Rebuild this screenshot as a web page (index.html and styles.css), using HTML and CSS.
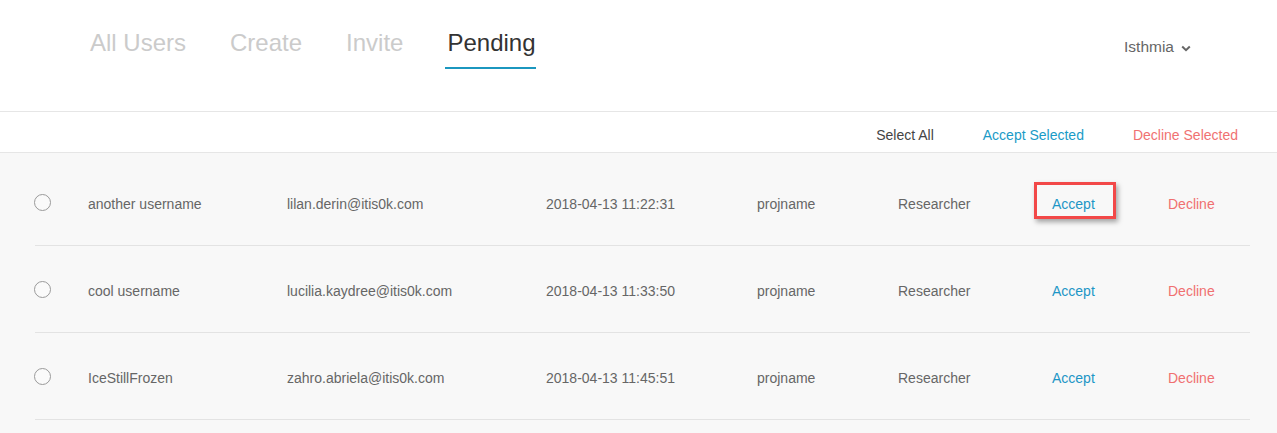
FILE: index.html
```html
<!DOCTYPE html>
<html>
<head>
<meta charset="utf-8">
<link rel="stylesheet" href="styles.css">
</head>
<body>
<header class="header">
  <nav class="tabs">
    <a class="tab">All Users</a>
    <a class="tab">Create</a>
    <a class="tab">Invite</a>
    <a class="tab active">Pending</a>
  </nav>
  <div class="account">
    <span>Isthmia</span>
    <svg class="chev" width="10" height="7" viewBox="0 0 10 7"><path d="M1.2 1.5 L5 5.2 L8.8 1.5" fill="none" stroke="#666" stroke-width="2"/></svg>
  </div>
</header>
<div class="toolbar">
  <a class="tool select">Select All</a>
  <a class="tool accept">Accept Selected</a>
  <a class="tool decline">Decline Selected</a>
</div>
<main class="list">
  <div class="row">
    <span class="radio"></span>
    <span>another username</span>
    <span>lilan.derin@itis0k.com</span>
    <span>2018-04-13 11:22:31</span>
    <span>projname</span>
    <span>Researcher</span>
    <span class="act accept"><span class="highlight"></span>Accept</span>
    <span class="act decline">Decline</span>
  </div>
  <div class="row">
    <span class="radio"></span>
    <span>cool username</span>
    <span>lucilia.kaydree@itis0k.com</span>
    <span>2018-04-13 11:33:50</span>
    <span>projname</span>
    <span>Researcher</span>
    <span class="act accept">Accept</span>
    <span class="act decline">Decline</span>
  </div>
  <div class="row">
    <span class="radio"></span>
    <span>IceStillFrozen</span>
    <span>zahro.abriela@itis0k.com</span>
    <span>2018-04-13 11:45:51</span>
    <span>projname</span>
    <span>Researcher</span>
    <span class="act accept">Accept</span>
    <span class="act decline">Decline</span>
  </div>
</main>
</body>
</html>
```
FILE: styles.css
```css
html, body {
  margin: 0;
  padding: 0;
}
body {
  background: #f8f8f8;
  font-family: "Liberation Sans", Arial, sans-serif;
  color: #666;
  height: 433px;
  overflow: hidden;
}
.header {
  background: #fff;
  height: 112px;
  box-sizing: border-box;
  border-bottom: 1px solid #e6e6e6;
  display: flex;
  justify-content: space-between;
  align-items: flex-start;
  padding: 29px 86px 0 90px;
}
.tabs {
  display: flex;
  gap: 44px;
}
.tab {
  font-size: 24px;
  line-height: 27px;
  color: #cbcbcb;
  padding-bottom: 11px;
  border-bottom: 2px solid transparent;
}
.tab.active {
  color: #333;
  border-bottom-color: #1b97bf;
  margin-left: -2px;
  padding: 0 0 11px 2px;
}
.account {
  display: flex;
  align-items: center;
  gap: 7px;
  font-size: 15.5px;
  color: #666;
  margin-top: 9px;
}
.chev {
  margin-top: 2px;
}
.toolbar {
  background: #fff;
  height: 41px;
  box-sizing: border-box;
  border-bottom: 1px solid #e6e6e6;
  display: flex;
  justify-content: flex-end;
  align-items: center;
  gap: 49px;
  padding: 5px 39px 0 0;
  font-size: 14px;
}
.tool.select { color: #444; }
.tool.accept { color: #1a9bc7; }
.tool.decline { color: #f07272; }
.list {
  padding: 6px 27px 0 35px;
}
.row {
  display: grid;
  grid-template-columns: 53px 199px 259px 211px 141px 154px 116px 1fr;
  align-items: start;
  height: 87px;
  box-sizing: border-box;
  padding-top: 35px;
  border-bottom: 1px solid #e3e3e3;
  font-size: 14px;
  line-height: 20px;
  color: #666;
}
.radio {
  width: 17px;
  height: 17px;
  box-sizing: border-box;
  border: 1px solid #9a9a9a;
  border-radius: 50%;
  margin-left: -1px;
  background: #fafafa;
}
.act { position: relative; }
.act.accept { color: #1d96c6; }
.act.decline { color: #f07070; }
.highlight {
  position: absolute;
  left: -18px;
  top: -12px;
  width: 82px;
  height: 37px;
  box-sizing: border-box;
  border: 3px solid #f24848;
  box-shadow: 2px 3px 5px rgba(0, 0, 0, 0.35);
}
```
